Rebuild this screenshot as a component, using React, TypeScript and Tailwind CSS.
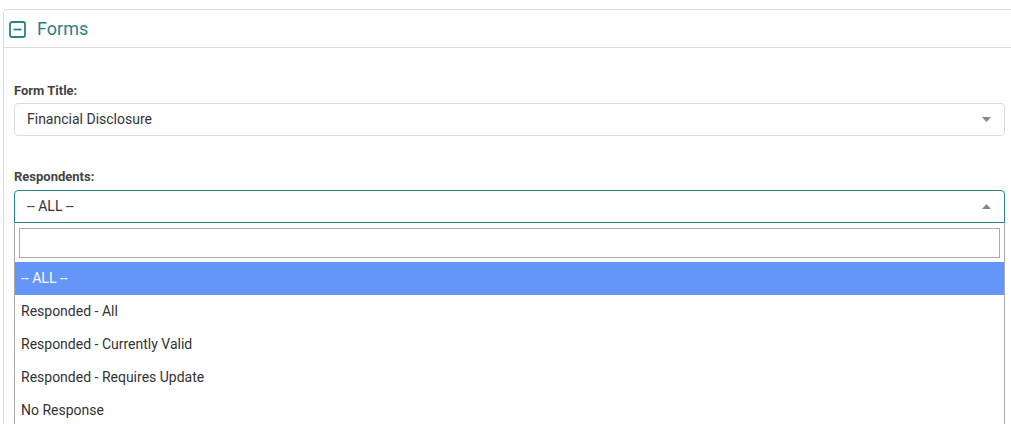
const options = [
  "-- ALL --",
  "Responded - All",
  "Responded - Currently Valid",
  "Responded - Requires Update",
  "No Response",
];

const App = () => {
  return (
    <div className="w-[1011px] h-[424px] overflow-hidden bg-white font-['Roboto',sans-serif] text-[#333]">
      <div className="ml-[3px] mt-[9px] w-[1012px] h-[430px] border border-[#dddddd] rounded-[4px]">
        <div className="h-[38px] flex items-center gap-[11px] pl-[5px] border-b border-[#dddddd]">
          <svg width="17" height="17" viewBox="0 0 17 17" className="mt-[1px]">
            <rect x="1" y="1" width="15" height="15" rx="2" fill="none" stroke="#2b8089" strokeWidth="1.8" />
            <line x1="4.5" y1="8.5" x2="12.5" y2="8.5" stroke="#2b8089" strokeWidth="1.8" />
          </svg>
          <span className="text-[18px] text-[#2b8089]">Forms</span>
        </div>
        <div className="pl-[10px] pt-[36px] w-[1001px]">
          <label className="block text-[13px] font-bold text-[#444] leading-[14px]">Form Title:</label>
          <div className="mt-[5px] h-[33px] border border-[#dddddd] rounded-[4px] flex items-center justify-between pl-[12px] pr-[13px]">
            <span className="text-[14px] text-[#333]">Financial Disclosure</span>
            <svg width="9" height="5" viewBox="0 0 9 5">
              <path d="M0 0 L9 0 L4.5 5 Z" fill="#888" />
            </svg>
          </div>
          <label className="block mt-[34px] text-[13px] font-bold text-[#444] leading-[14px]">Respondents:</label>
          <div className="mt-[6px] h-[33px] border border-[#2b8089] rounded-t-[4px] flex items-center justify-between pl-[12px] pr-[13px]">
            <span className="text-[14px] text-[#333]">-- ALL --</span>
            <svg width="9" height="5" viewBox="0 0 9 5">
              <path d="M0 5 L9 5 L4.5 0 Z" fill="#888" />
            </svg>
          </div>
          <div className="border-x border-[#aaaaaa] h-[220px]">
            <div className="pt-[5px] px-[4px] pb-[4px]">
              <div className="h-[30px] border border-[#aaaaaa]" />
            </div>
            <ul>
              {options.map((o, i) => (
                <li
                  key={o}
                  className={`h-[33px] flex items-center pl-[6px] text-[14px] ${
                    i === 0 ? "bg-[#6495f8] text-white" : "text-[#333]"
                  }`}
                >
                  {o}
                </li>
              ))}
            </ul>
          </div>
        </div>
      </div>
    </div>
  );
};

export default App;
